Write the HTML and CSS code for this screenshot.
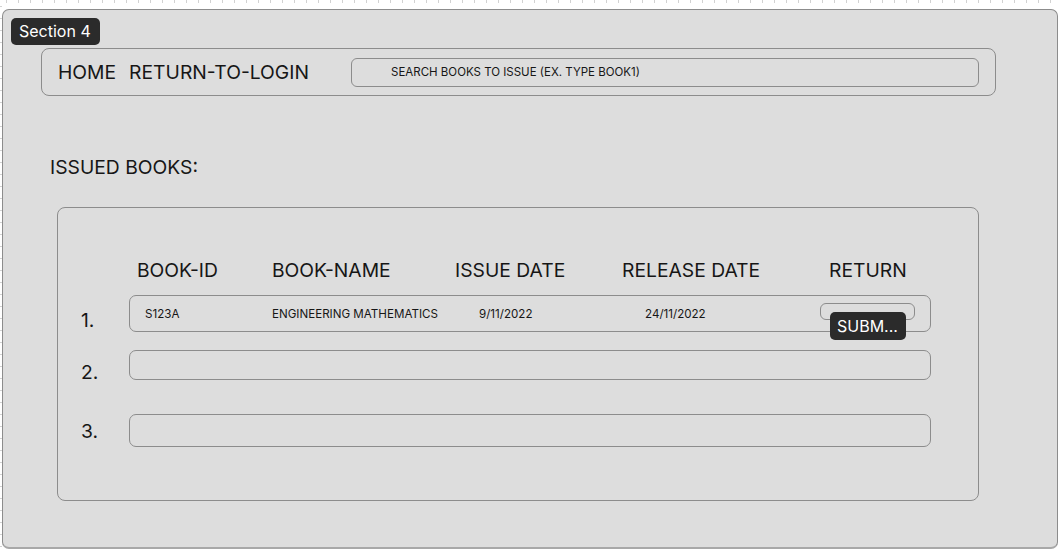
FILE: index.html
```html
<!DOCTYPE html>
<html lang="en">
<head>
<meta charset="utf-8">
<title>Section 4</title>
<link rel="stylesheet" href="styles.css">
</head>
<body>
<div class="canvas">
  <div class="frame">
    <div class="section-badge">Section 4</div>
    <nav class="nav">
      <a class="nav-link">HOME</a>
      <a class="nav-link">RETURN-TO-LOGIN</a>
      <div class="search">SEARCH BOOKS TO ISSUE (EX. TYPE BOOK1)</div>
    </nav>
    <h2 class="title">ISSUED BOOKS:</h2>
    <div class="table">
      <div class="head-row">
        <div class="h c1">BOOK-ID</div>
        <div class="h c2">BOOK-NAME</div>
        <div class="h c3">ISSUE DATE</div>
        <div class="h c4">RELEASE DATE</div>
        <div class="h">RETURN</div>
      </div>
      <div class="line line-1">
        <div class="num">1.</div>
        <div class="row row-1">
          <div class="cell d1">S123A</div>
          <div class="cell d2">ENGINEERING MATHEMATICS</div>
          <div class="cell d3">9/11/2022</div>
          <div class="cell d4">24/11/2022</div>
          <div class="ret">
            <div class="ret-btn"></div>
            <div class="submit">SUBM...</div>
          </div>
        </div>
      </div>
      <div class="line line-2">
        <div class="num">2.</div>
        <div class="row row-2"></div>
      </div>
      <div class="line line-3">
        <div class="num">3.</div>
        <div class="row row-3"></div>
      </div>
    </div>
  </div>
</div>
</body>
</html>
```

FILE: styles.css
```css
* { box-sizing: border-box; }
html, body { margin: 0; padding: 0; background: #ffffff; }
body {
  font-family: Inter, "Noto Sans", "Liberation Sans", sans-serif;
  color: #161616;
}
.canvas {
  width: 1062px;
  height: 556px;
  padding: 9px 0 0 2px;
  background-image:
    repeating-linear-gradient(90deg, #d2d2d2 0 1px, transparent 1px 12px),
    repeating-linear-gradient(180deg, #d2d2d2 0 1px, transparent 1px 12px);
  background-size: 100% 3px, 2px 100%;
  background-position: 6px 0, 0 6px;
  background-repeat: no-repeat;
}
.frame {
  position: relative;
  width: 1056px;
  height: 540px;
  background: #dddddd;
  border: 1px solid #8c8c8c;
  border-bottom: 2px solid #a8a8a8;
  border-radius: 7px;
  padding: 38px 0 0 38px;
}
.section-badge {
  position: absolute;
  left: 8px;
  top: 8px;
  width: 89px;
  height: 27px;
  background: #2b2b2b;
  color: #ffffff;
  border-radius: 5px;
  font-size: 16px;
  line-height: 27px;
  padding-left: 8px;
}
.nav {
  width: 955px;
  height: 48px;
  border: 1px solid #8c8c8c;
  border-radius: 8px;
  display: flex;
  align-items: center;
  padding: 0 16px;
}
.nav-link {
  font-size: 19.3px;
  line-height: 24px;
  margin-right: 13px;
}
.search {
  margin-left: auto;
  width: 628px;
  height: 29px;
  border: 1px solid #8c8c8c;
  border-radius: 6px;
  font-size: 11.5px;
  line-height: 27px;
  padding-left: 39px;
}
.title {
  margin: 59px 0 0 9px;
  font-size: 19.3px;
  font-weight: 400;
  line-height: 24px;
}
.table {
  margin: 28px 0 0 16px;
  width: 922px;
  height: 294px;
  border: 1px solid #8c8c8c;
  border-radius: 8px;
  padding: 50px 0 0 0;
}
.head-row {
  display: flex;
  padding-left: 79px;
  font-size: 19.3px;
  line-height: 24px;
}
.h.c1 { width: 135px; }
.h.c2 { width: 183px; }
.h.c3 { width: 167px; }
.h.c4 { width: 207px; }
.line {
  display: grid;
  grid-template-columns: 71px 802px;
}
.num {
  padding-left: 23px;
  font-size: 19.3px;
  line-height: 24px;
}
.row {
  border: 1px solid #8c8c8c;
  border-radius: 7px;
}
.line-1 { margin-top: 13px; }
.line-1 .num { align-self: end; }
.row-1 {
  height: 37px;
  display: flex;
  align-items: center;
  padding-left: 15px;
  font-size: 11.6px;
}
.d1 { width: 127px; }
.d2 { width: 207px; }
.d3 { width: 166px; }
.d4 { width: 175px; }
.ret {
  position: relative;
  align-self: flex-start;
  margin-top: 7px;
}
.ret-btn {
  width: 95px;
  height: 17px;
  border: 1px solid #8c8c8c;
  border-radius: 6px;
}
.submit {
  position: absolute;
  left: 10px;
  top: 9px;
  width: 76px;
  height: 28px;
  background: #2b2b2b;
  color: #ffffff;
  border-radius: 5px;
  font-size: 16px;
  line-height: 28px;
  padding-left: 7px;
}
.line-2 { margin-top: 18px; }
.line-2 .num { align-self: end; margin-bottom: -4px; }
.row-2 { height: 30px; }
.line-3 { margin-top: 34px; }
.line-3 .num { align-self: start; margin-top: 5px; }
.row-3 { height: 33px; }
```
